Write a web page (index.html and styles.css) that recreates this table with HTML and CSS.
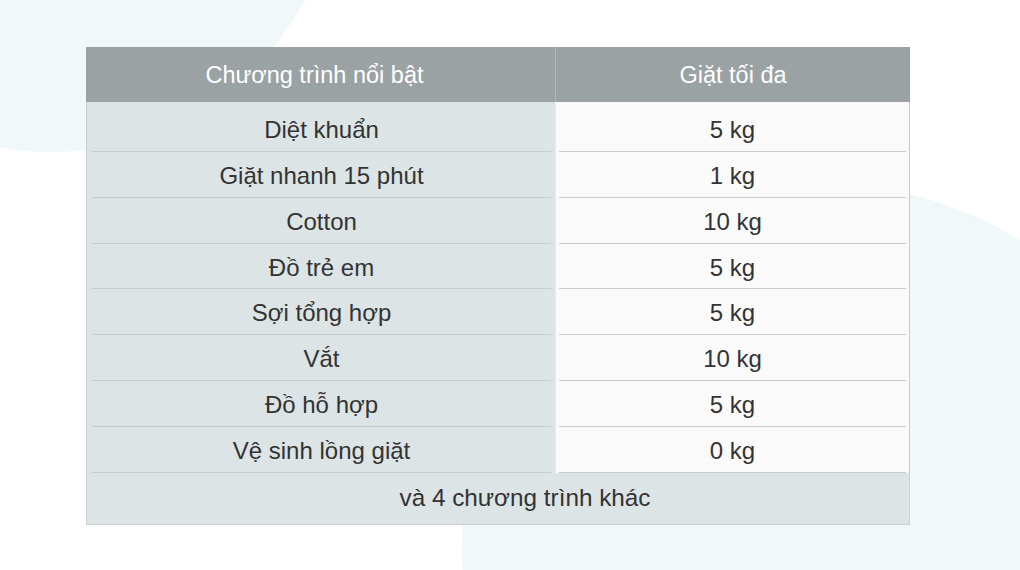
FILE: index.html
```html
<!DOCTYPE html>
<html lang="vi">
<head>
<meta charset="utf-8">
<title>Chương trình nổi bật</title>
<link rel="stylesheet" href="styles.css">
</head>
<body>
<div class="table">
  <div class="head">
    <div class="hcell hcell-l">Chương trình nổi bật</div>
    <div class="hcell hcell-r">Giặt tối đa</div>
  </div>
  <div class="body">
    <div class="col col-l">
      <div class="row">Diệt khuẩn</div>
      <div class="row">Giặt nhanh 15 phút</div>
      <div class="row">Cotton</div>
      <div class="row">Đồ trẻ em</div>
      <div class="row">Sợi tổng hợp</div>
      <div class="row">Vắt</div>
      <div class="row">Đồ hỗ hợp</div>
      <div class="row">Vệ sinh lồng giặt</div>
    </div>
    <div class="col col-r">
      <div class="row">5 kg</div>
      <div class="row">1 kg</div>
      <div class="row">10 kg</div>
      <div class="row">5 kg</div>
      <div class="row">5 kg</div>
      <div class="row">10 kg</div>
      <div class="row">5 kg</div>
      <div class="row">0 kg</div>
    </div>
  </div>
  <div class="foot">và 4 chương trình khác</div>
</div>
</body>
</html>
```
FILE: styles.css
```css
* { box-sizing: border-box; }
html, body { margin: 0; padding: 0; }
body {
  width: 1020px;
  height: 570px;
  overflow: hidden;
  font-family: "Liberation Sans", Arial, sans-serif;
  color: #333333;
  background-color: #ffffff;
  background-image:
    radial-gradient(circle 290px at 50px -138px, #f0f8fa 289.5px, rgba(240,248,250,0) 290.5px),
    radial-gradient(circle 365px at 827px 550px, #f0f8fa 364.5px, rgba(240,248,250,0) 365.5px);
  background-repeat: no-repeat;
}
.table {
  width: 824px;
  margin: 47px 0 0 86px;
}
.head {
  display: flex;
  height: 55px;
  background: #9aa2a4;
  color: #ffffff;
}
.hcell {
  display: flex;
  align-items: center;
  justify-content: center;
  font-size: 23.5px;
  padding-top: 1px;
}
.hcell-l { width: 470px; border-right: 1px solid #b4babc; padding-right: 12px; }
.hcell-r { width: 354px; }
.body {
  display: flex;
  border-left: 1px solid #c9d0d2;
  border-right: 1px solid #c4c9cb;
}
.col {
  padding-top: 4px;
}
.col-l {
  width: 469px;
  background: #dce4e6;
  padding-left: 5px;
  padding-right: 4px;
  border-right: 1px solid #e8eeef;
}
.col-r {
  width: 353px;
  background: #fafafa;
  padding-left: 3px;
  padding-right: 3px;
}
.row {
  height: 45.86px;
  border-bottom: 1px solid #c5cbcd;
  display: flex;
  align-items: center;
  justify-content: center;
  font-size: 24px;
  padding-top: 3px;
}
.foot {
  height: 52px;
  background: #dce4e6;
  border: 1px solid #c9d0d2;
  border-top: none;
  display: flex;
  align-items: center;
  justify-content: center;
  font-size: 24.3px;
  padding-left: 54px;
  padding-bottom: 1px;
}
```
